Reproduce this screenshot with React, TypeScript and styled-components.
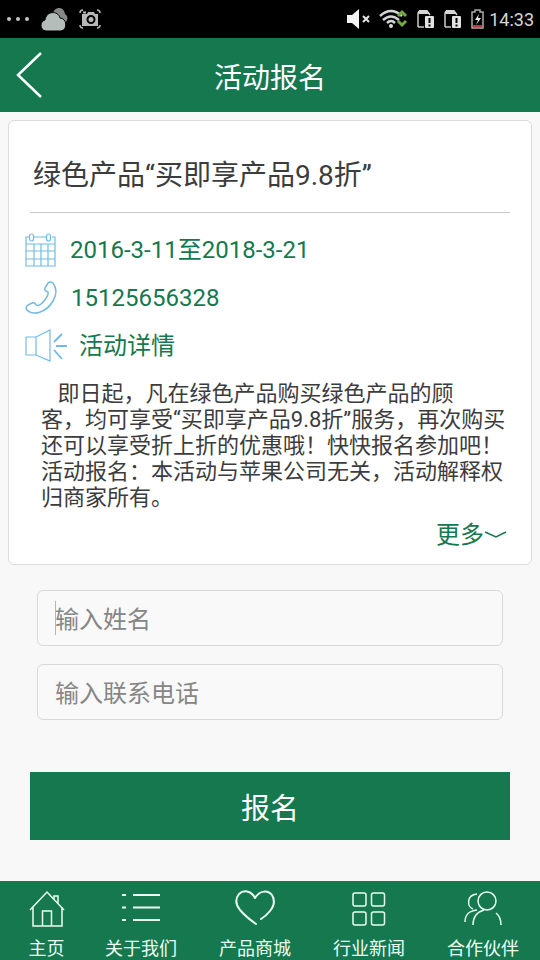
import React from "react";
import styled, { createGlobalStyle } from "styled-components";

const GREEN = "#15784f";
const SKY = "#6fbce3";

const GlobalStyle = createGlobalStyle`
  *, *::before, *::after { box-sizing: border-box; }
  body {
    margin: 0;
    background: #f8f8f8;
    font-family: Roboto, "Noto Sans CJK SC", sans-serif;
    color: #3c3c3c;
  }
  button, input { font: inherit; }
`;

const Page = styled.div`
  display: flex;
  flex-direction: column;
  min-height: 100vh;
`;

const StatusBar = styled.div`
  display: flex;
  align-items: center;
  justify-content: space-between;
  height: 38px;
  padding: 0 6px;
  background: #000;
  color: #d6d6d6;
  font-size: 18px;
`;

const StatusGroup = styled.div<{ $gap: number }>`
  display: flex;
  align-items: center;
  gap: ${(p) => p.$gap}px;
`;

const Header = styled.header`
  display: grid;
  grid-template-columns: 60px 1fr 60px;
  align-items: center;
  height: 74px;
  background: ${GREEN};
  color: #fff;
`;

const BackButton = styled.button`
  display: flex;
  align-items: center;
  height: 74px;
  padding: 0 0 0 16px;
  border: 0;
  background: none;
  color: #fff;
`;

const HeaderTitle = styled.h1`
  margin: 0;
  padding-top: 8px;
  text-align: center;
  font-size: 28px;
  font-weight: 400;
  line-height: 40px;
`;

const Card = styled.section`
  margin: 8px 8px 0;
  padding: 0 14px 13px 16px;
  border: 1px solid #dcdcdc;
  border-radius: 6px;
  background: #fff;
`;

const CardTitle = styled.h2`
  margin: 0 7px 0 5px;
  padding: 35px 0 16px 3px;
  border-bottom: 1px solid #c8c8c8;
  font-size: 28px;
  font-weight: 400;
  line-height: 40px;
`;

const InfoList = styled.div`
  padding-top: 13px;
`;

const InfoRow = styled.div<{ $gap: number }>`
  display: flex;
  align-items: center;
  gap: ${(p) => p.$gap}px;
  height: 48px;
  color: ${GREEN};
  font-size: 24px;
  line-height: 36px;
`;

const Description = styled.p`
  margin: 11px 0 0 16px;
  font-size: 22px;
  line-height: 26px;
  white-space: pre-wrap;
`;

const MoreButton = styled.button`
  display: flex;
  align-items: center;
  margin: 8px 10px 0 auto;
  padding: 0;
  border: 0;
  background: none;
  color: ${GREEN};
  font-size: 24px;
  line-height: 32px;
`;

const Form = styled.form`
  display: flex;
  flex-direction: column;
  gap: 18px;
  padding: 25px 30px 40px;
`;

const Field = styled.label`
  position: relative;
  display: block;
  margin: 0 7px;
`;

const TextInput = styled.input`
  display: block;
  width: 100%;
  height: 56px;
  padding: 3px 17px 0;
  border: 1px solid #d9d9d9;
  border-radius: 6px;
  outline: none;
  background: #f9f9f9;
  color: #3c3c3c;
  font-size: 24px;
  &::placeholder {
    color: #868686;
    opacity: 1;
  }
`;

const Caret = styled.span`
  position: absolute;
  top: 11px;
  bottom: 11px;
  left: 18px;
  width: 1px;
  background: #b5b5b5;
`;

const SubmitButton = styled.button`
  height: 68px;
  margin-top: 34px;
  padding: 0;
  border: 0;
  background: ${GREEN};
  color: #fff;
  font-size: 29px;
`;

const TabBar = styled.nav`
  display: grid;
  grid-template-columns: 84fr repeat(4, 114fr);
  height: 79px;
  margin-top: auto;
  background: ${GREEN};
`;

const Tab = styled.a`
  display: flex;
  flex-direction: column;
  align-items: center;
  gap: 8px;
  padding-top: 8px;
  color: #e9fff4;
  font-size: 18px;
  line-height: 24px;
  text-decoration: none;
  white-space: nowrap;
  &:first-child {
    padding-left: 9px;
  }
`;

const Icon = styled.svg`
  display: block;
  flex: none;
  fill: none;
  stroke: currentColor;
  overflow: visible;
`;

const SkyIcon = styled(Icon)`
  color: ${SKY};
`;

const SimIcon = () => (
  <Icon width="17" height="20" viewBox="0 0 17 20">
    <path d="M1 18V5Q1 2 4 2h6l3 4" stroke="#c9c9c9" strokeWidth="1.5" />
    <path d="M2 1h8l3 4H1z" fill="#d6d6d6" stroke="none" />
    <path d="M1 18h6" stroke="#c9c9c9" strokeWidth="1.5" />
    <rect x="8" y="7" width="9" height="12" rx="1" fill="#e2e2e2" stroke="none" />
    <path d="M12.500 9v5M12.500 15.500v2" stroke="#000" strokeWidth="2" />
  </Icon>
);

const tabs = [
  {
    label: "主页",
    icon: (
      <>
        <path d="M1 21L18 3l17 18M4 18v19h29V18M13.500 37V22h9v15" />
        <path d="M25 10V7h4v8" />
      </>
    ),
  },
  {
    label: "关于我们",
    icon: (
      <path d="M-1 6h4M10 6h27M-1 18.500h4M10 18.500h27M-1 31h4M10 31h27" strokeWidth="2" />
    ),
  },
  {
    label: "产品商城",
    icon: (
      <path
        d="M18 9C14 1 6 1 2 5C-2 10-1 16 3 21Q9 28 19 35M18 9C23 1 31 1 35 6C38 11 37 17 33 22Q29 27 24 30"
        strokeWidth="2"
        strokeLinecap="round"
      />
    ),
  },
  {
    label: "行业新闻",
    icon: (
      <>
        <rect x="2" y="4" width="13" height="13" rx="2" />
        <rect x="20.500" y="4" width="13" height="13" rx="2" />
        <rect x="2" y="23" width="13" height="13" rx="2" />
        <rect x="20.500" y="23" width="13" height="13" rx="2" />
      </>
    ),
  },
  {
    label: "合作伙伴",
    icon: (
      <>
        <circle cx="22" cy="12" r="9" />
        <path d="M12 5C1 6 2 18 8 20M0 33C0 25 4 22 12 21M8 36C8 27 12 23 19 21M31 24Q36 28 36 36" />
      </>
    ),
  },
];

export default function App() {
  return (
    <>
      <GlobalStyle />
      <Page>
        <StatusBar>
          <StatusGroup $gap={11}>
            <Icon width="24" height="20" viewBox="0 0 24 20">
              <g fill="#c4c4c4" stroke="none">
                <circle cx="3" cy="10" r="2" />
                <circle cx="12" cy="10" r="2" />
                <circle cx="21" cy="10" r="2" />
              </g>
            </Icon>
            <Icon width="27" height="24" viewBox="0 0 27 24">
              <g stroke="none">
                <path d="M12 7C13-1 23-1 24 7C28 9 27 15 22 17z" fill="#858988" />
                <path
                  d="M5 24C-2 23-1 14 4 13C5 4 17 3 19 11C26 11 27 23 20 24z"
                  fill="#b4bdba"
                  stroke="#000"
                  strokeWidth="1"
                />
              </g>
            </Icon>
            <Icon width="22" height="20" viewBox="0 0 22 20">
              <path d="M1 4Q1 1 4 1M18 1Q21 1 21 4M21 16Q21 19 18 19M4 19Q1 19 1 16" stroke="#b5b5b5" strokeWidth="1.500" />
              <path d="M3 5h5l1-2h6l1 2h3v12H3z" fill="#b8b8b8" stroke="none" />
              <circle cx="12" cy="10.500" r="3.500" fill="#b8b8b8" stroke="#000" strokeWidth="2" />
              <path d="M4 3.500h3" stroke="#b8b8b8" strokeWidth="2" />
            </Icon>
          </StatusGroup>
          <StatusGroup $gap={10}>
            <Icon width="23" height="20" viewBox="0 0 23 20">
              <path d="M0 6h5l7-6v20l-7-6H0z" fill="#f3f3f3" stroke="none" />
              <path d="M16 7l6 6M22 7l-6 6" stroke="#e5e5e5" strokeWidth="2" />
            </Icon>
            <Icon width="27" height="20" viewBox="0 0 27 20">
              <path d="M0 7Q11-3 22 7M3 11Q11 4 19 11M7 14Q11 10 15 14" stroke="#d6d6d6" strokeWidth="2.500" />
              <circle cx="11" cy="17" r="2" fill="#ddd" stroke="none" />
              <path d="M18 7l4-4 4 4M18 12l4 4 4-4" stroke="#75a83f" strokeWidth="3" />
            </Icon>
            <SimIcon />
            <SimIcon />
            <StatusGroup $gap={5}>
              <Icon width="13" height="20" viewBox="0 0 13 20">
                <path d="M1 3h3V1h5v2h3v16H1z" stroke="#b0aaaa" strokeWidth="1.500" />
                <path d="M8 5l-4 6h3l-2 5 5-7H7z" fill="#eee" stroke="none" />
                <path d="M2 17h9" stroke="#b63b3b" strokeWidth="2" />
              </Icon>
              <span>14:33</span>
            </StatusGroup>
          </StatusGroup>
        </StatusBar>

        <Header>
          <BackButton type="button" aria-label="返回">
            <Icon width="26" height="46" viewBox="0 0 26 46" strokeWidth="2.500">
              <path d="M25 1L2 23l23 22" />
            </Icon>
          </BackButton>
          <HeaderTitle>活动报名</HeaderTitle>
        </Header>

        <Card>
          <CardTitle>绿色产品“买即享产品9.8折”</CardTitle>
          <InfoList>
            <InfoRow $gap={14}>
              <SkyIcon width="31" height="34" viewBox="0 0 31 34" strokeWidth="1.200">
                <path d="M4 4H1v29h29V4h-3M9 4h13M1 11h29M1 18h29M1 26h29M9 11v22M16 11v22M23 11v22" />
                <rect x="4.500" y="1" width="4" height="7" rx="2" />
                <rect x="21.500" y="1" width="4" height="7" rx="2" />
              </SkyIcon>
              <span>2016-3-11至2018-3-21</span>
            </InfoRow>
            <InfoRow $gap={14}>
              <SkyIcon width="32" height="34" viewBox="0 0 32 34" strokeWidth="1.500">
                <path d="M23 2Q25 0 28 2Q34 10 28 20C21 32 8 35 2 29Q0 26 3 24L7 22Q10 21 11 24Q14 26 19 20Q24 14 23 11Q19 10 20 7z" />
              </SkyIcon>
              <span>15125656328</span>
            </InfoRow>
            <InfoRow $gap={12}>
              <SkyIcon width="42" height="34" viewBox="0 0 42 34" strokeWidth="1.200">
                <path d="M1 8h10L25 1v31l-14-6H1zM11 8v18" />
                <path d="M29 13l8-8M31 17h11M29 21l8 9" strokeWidth="1.800" />
              </SkyIcon>
              <span>活动详情</span>
            </InfoRow>
          </InfoList>
          <Description>
            {"   即日起，凡在绿色产品购买绿色产品的顾"}
            <br />
            客，均可享受“买即享产品9.8折”服务，再次购买
            <br />
            还可以享受折上折的优惠哦！快快报名参加吧！
            <br />
            活动报名：本活动与苹果公司无关，活动解释权
            <br />
            归商家所有。
          </Description>
          <MoreButton type="button">
            更多
            <Icon width="23" height="8" viewBox="0 0 23 8" strokeWidth="1.500">
              <path d="M1 1l11 5L22 1" />
            </Icon>
          </MoreButton>
        </Card>

        <Form onSubmit={(e) => e.preventDefault()}>
          <Field>
            <TextInput type="text" aria-label="姓名" placeholder="输入姓名" />
            <Caret />
          </Field>
          <Field>
            <TextInput type="tel" aria-label="联系电话" placeholder="输入联系电话" />
          </Field>
          <SubmitButton type="submit">报名</SubmitButton>
        </Form>

        <TabBar>
          {tabs.map((tab) => (
            <Tab key={tab.label} href="#">
              <Icon width="36" height="40" viewBox="0 0 36 40" strokeWidth="1.500">
                {tab.icon}
              </Icon>
              {tab.label}
            </Tab>
          ))}
        </TabBar>
      </Page>
    </>
  );
}
